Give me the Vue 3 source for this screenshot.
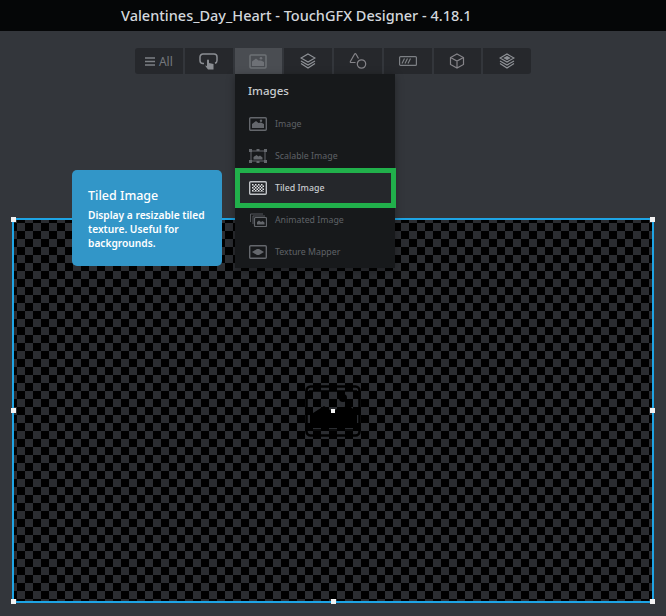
<script setup>
const tools = ['menu', 'interact', 'image', 'layers', 'shapes', 'progress', 'cube', 'stack']
const items = [
  { key: 'image', label: 'Image' },
  { key: 'scalable', label: 'Scalable Image' },
  { key: 'tiled', label: 'Tiled Image', active: true },
  { key: 'animated', label: 'Animated Image' },
  { key: 'mapper', label: 'Texture Mapper' }
]
const handles = ['tl', 'tc', 'tr', 'ml', 'mr', 'bl', 'bc', 'br']
</script>

<template>
  <div class="app">
    <header class="titlebar">Valentines_Day_Heart - TouchGFX Designer - 4.18.1</header>

    <nav class="toolbar">
      <button v-for="t in tools" :key="t" class="tool" :class="{ on: t === 'image' }">
        <template v-if="t === 'menu'">
          <svg width="10" height="9" viewBox="0 0 10 9"><path d="M0 1h10M0 4.500h10M0 8h10" stroke="#7d8085" stroke-width="1.400" fill="none"/></svg>
          <span class="all">All</span>
        </template>
        <svg v-else-if="t === 'interact'" width="19" height="17" viewBox="0 0 19 17" fill="none">
          <path d="M5 10.500H4a3 3 0 0 1-3-3V4a3 3 0 0 1 3-3h11a3 3 0 0 1 3 3v3.500a3 3 0 0 1-2 2.800" stroke="#8a8d92" stroke-width="1.500"/>
          <path d="M8 7.500a1 1 0 0 1 2 0V10l4.500 1v5.500H9L6 12.500l2 .5z" fill="#8a8d92"/>
        </svg>
        <svg v-else-if="t === 'image'" width="18" height="15" viewBox="0 0 18 15" fill="none">
          <rect x="1" y="1" width="16" height="13" rx="1" stroke="#6e7176" stroke-width="1.500"/>
          <path d="M3 12V7.500l4-3 2.500 2L12 6.500l3 1.500V12z" fill="#6e7176"/><circle cx="12" cy="4.200" r="1.300" fill="#6e7176"/>
        </svg>
        <svg v-else-if="t === 'layers'" width="16" height="16" viewBox="0 0 16 16" fill="none" stroke="#8f9297" stroke-width="1.200">
          <path d="M8 1l7 4-7 4-7-4z"/><path d="M1 8l7 4 7-4"/><path d="M1 10.500l7 4.500 7-4.500"/>
        </svg>
        <svg v-else-if="t === 'shapes'" width="18" height="16" viewBox="0 0 18 16" fill="none" stroke="#858489" stroke-width="1.200">
          <path d="M6.500 9.500H2.200Q.8 9.500 1.500 8.200L5.500 1.300Q6.300 0 7.100 1.300L9.500 5.500"/><circle cx="12.500" cy="11" r="4.200"/>
        </svg>
        <svg v-else-if="t === 'progress'" width="18" height="10" viewBox="0 0 18 10" fill="none">
          <rect x="0.600" y="0.600" width="16.800" height="8.800" rx="1" stroke="#7d8085" stroke-width="1.200"/>
          <path d="M3 7.500l2.500-5M6 7.500l2.500-5M9 7.500l2.500-5" stroke="#7d8085" stroke-width="1.200"/>
        </svg>
        <svg v-else-if="t === 'cube'" width="16" height="16" viewBox="0 0 16 16" fill="none" stroke="#858489" stroke-width="1.200">
          <path d="M8 1l6.500 3.500v7L8 15l-6.500-3.500v-7zM1.500 4.500L8 8l6.500-3.500M8 8v7"/>
        </svg>
        <svg v-else width="16" height="16" viewBox="0 0 16 16" fill="none" stroke="#8f9297" stroke-width="1.200">
          <path d="M8 1l7 4-7 4-7-4z"/><path d="M5.500 5L8 3.600 10.500 5 8 6.400z" fill="#8f9297"/><path d="M1 8l7 4 7-4"/><path d="M1 10.500l7 4.500 7-4.500"/>
        </svg>
      </button>
    </nav>

    <section class="canvas">
      <svg class="placeholder" width="56" height="52" viewBox="0 0 56 52" fill="none">
        <rect x="1.500" y="1.500" width="53" height="49" rx="4" stroke="#000" stroke-width="2.500"/>
        <path d="M4 6h48M4 45h48" stroke="#000" stroke-width="1.500"/>
        <path d="M5 43V30l14-9 9 6 5-4 4 2 5-6 10 8v16z" fill="#000"/>
        <circle cx="38" cy="13" r="4" fill="#000"/>
      </svg>
      <i v-for="h in handles" :key="h" class="handle" :class="h"></i>
      <i class="handle center"></i>
    </section>

    <aside class="tip">
      <h3>Tiled Image</h3>
      <p>Display a resizable tiled texture. Useful for backgrounds.</p>
    </aside>

    <div class="drop">
      <h4>Images</h4>
      <div v-for="it in items" :key="it.key" class="row" :class="{ active: it.active }">
        <svg width="18" height="14" viewBox="0 0 18 14" fill="none">
          <template v-if="it.key === 'image'">
            <rect x="0.700" y="0.700" width="16.600" height="12.600" rx="1" stroke="#64676c" stroke-width="1.400"/>
            <path d="M3 11V7l4-3 2.500 2L12 5.500l3 1.500V11z" fill="#64676c"/><circle cx="12" cy="3.700" r="1.200" fill="#64676c"/>
          </template>
          <template v-else-if="it.key === 'scalable'">
            <rect x="2" y="2" width="14" height="10" stroke="#64676c" stroke-width="1"/>
            <path d="M0 0h3v3H0zM7.500 0h3v2h-3zM15 0h3v3h-3zM0 11h3v3H0zM7.500 12h3v2h-3zM15 11h3v3h-3z" fill="#64676c"/>
            <path d="M4.500 10.500V8l3-2 2 1.500 1.500-1 2.500 2v2z" fill="#64676c"/>
          </template>
          <template v-else-if="it.key === 'tiled'">
            <defs><pattern id="tile" width="3" height="3" patternUnits="userSpaceOnUse"><rect width="1.500" height="1.500" fill="#e2e4e6"/><rect x="1.500" y="1.500" width="1.500" height="1.500" fill="#e2e4e6"/></pattern></defs>
            <rect x="0.700" y="0.700" width="16.600" height="12.600" rx="1" stroke="#bfc2c6" stroke-width="1.400"/>
            <rect x="3" y="3" width="12" height="8" fill="url(#tile)"/>
          </template>
          <template v-else-if="it.key === 'animated'">
            <path d="M14 1H1.500v8M16 3H4v8" stroke="#54575c" stroke-width="1"/>
            <rect x="5.500" y="4.500" width="12" height="9" rx="1" stroke="#64676c" stroke-width="1.200"/>
            <path d="M8 11.500V9l2-1.500 2 1.500 1.500-1 2 1.500v2z" fill="#64676c"/>
          </template>
          <template v-else>
            <rect x="0.700" y="0.700" width="16.600" height="12.600" rx="1" stroke="#64676c" stroke-width="1.400"/>
            <path d="M3 7l5-3h2l5 3-5 3H8z" fill="#64676c"/>
          </template>
        </svg>
        <span>{{ it.label }}</span>
      </div>
    </div>
    <div class="mark"></div>
  </div>
</template>

<style>
html, body { margin: 0; background: #33363b; }
</style>

<style scoped>
.app {
  position: relative;
  width: 666px;
  height: 616px;
  overflow: hidden;
  background: #33363b;
  font-family: "Noto Sans", "Open Sans", sans-serif;
}
.titlebar {
  height: 31px;
  line-height: 31px;
  padding-left: 121px;
  background: #050607;
  color: #d3d7dc;
  font-size: 14.500px;
  font-weight: 500;
  white-space: nowrap;
}
.toolbar {
  display: grid;
  grid-template-columns: repeat(8, 1fr);
  gap: 2px;
  width: 396px;
  height: 26px;
  margin: 17px 0 0 135px;
}
.tool {
  display: flex;
  align-items: center;
  justify-content: center;
  gap: 4px;
  padding: 0;
  border: 0;
  background: #26282c;
  font: inherit;
}
.tool:first-child { border-radius: 3px 0 0 3px; }
.tool:last-child { border-radius: 0 3px 3px 0; }
.tool.on { background: #4a4d52; }
.all { color: #75787d; font-size: 12px; }
.canvas {
  position: relative;
  box-sizing: border-box;
  width: 642px;
  height: 385px;
  margin: 144px 0 0 12px;
  border: 2px solid #1ea4e4;
  background-color: #000;
  background-image: repeating-conic-gradient(#000 0 25%, #2b2d31 0 50%);
  background-size: 16px 16px;
  background-position: 11px 11px;
}
.placeholder {
  position: absolute;
  left: 291px;
  top: 165px;
}
.handle {
  position: absolute;
  width: 5px;
  height: 5px;
  background: #f2f2f2;
}
.tl { left: -3px; top: -3px; }
.tc { left: 317px; top: -3px; }
.tr { right: -3px; top: -3px; }
.ml { left: -3px; top: 188px; }
.mr { right: -3px; top: 188px; }
.bl { left: -3px; bottom: -3px; }
.bc { left: 317px; bottom: -3px; }
.br { right: -3px; bottom: -3px; }
.center { left: 317px; top: 189px; width: 4px; height: 4px; }
.tip {
  position: absolute;
  left: 72px;
  top: 170px;
  box-sizing: border-box;
  width: 150px;
  height: 96px;
  padding: 17px 16px;
  border-radius: 5px;
  background: #3296c8;
  color: #fff;
}
.tip h3 {
  margin: 0 0 4px;
  font-size: 12.500px;
  line-height: 17px;
  font-weight: 500;
}
.tip p {
  margin: 0;
  font-size: 10.200px;
  line-height: 14px;
  font-weight: 600;
}
.drop {
  position: absolute;
  left: 235px;
  top: 74px;
  box-sizing: border-box;
  width: 160px;
  height: 194px;
  background: #17191b;
  box-shadow: 0 2px 8px rgba(0, 0, 0, 0.35);
}
.drop h4 {
  margin: 0;
  height: 34px;
  padding: 9px 0 0 13px;
  box-sizing: border-box;
  color: #c9cccf;
  font-size: 11.500px;
  line-height: 16px;
  font-weight: 500;
}
.row {
  display: flex;
  align-items: center;
  gap: 8px;
  height: 32px;
  padding-left: 14px;
  color: #5f6267;
  font-size: 8.800px;
}
.row.active {
  background: #25272b;
  color: #c9cccf;
  font-weight: 500;
}
.mark {
  position: absolute;
  left: 235px;
  top: 168px;
  box-sizing: border-box;
  width: 161px;
  height: 40px;
  border: 5px solid #21b04b;
}
</style>
